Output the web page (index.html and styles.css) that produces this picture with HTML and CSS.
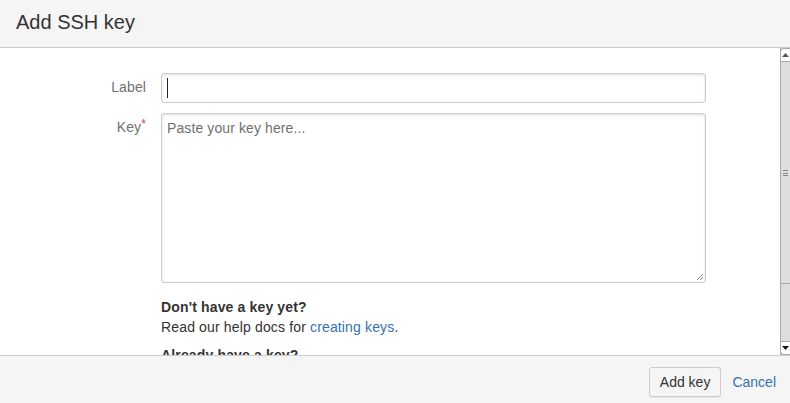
FILE: index.html
```html
<!DOCTYPE html>
<html>
<head>
<meta charset="utf-8">
<link rel="stylesheet" href="styles.css">
</head>
<body>
<div class="dialog">
  <header class="dlg-header"><h2 class="dlg-title">Add SSH key</h2></header>
  <div class="dlg-middle">
    <div class="dlg-content">
      <div class="field-group">
        <label class="field-label">Label</label>
        <div class="text-input"><span class="caret"></span></div>
      </div>
      <div class="field-group">
        <label class="field-label">Key<span class="req">*</span></label>
        <div class="textarea">Paste your key here...
          <svg class="grip" width="8" height="8" viewBox="0 0 8 8"><path d="M7 1L1 7M7 4L4 7" stroke="#888" stroke-width="1"/></svg>
        </div>
      </div>
      <div class="help">
        <p class="help-title">Don't have a key yet?</p>
        <p class="help-text">Read our help docs for <a class="link">creating keys</a>.</p>
        <p class="help-title">Already have a key?</p>
      </div>
    </div>
    <div class="scrollbar">
      <div class="sb-btn sb-up"><svg width="7" height="4" viewBox="0 0 7 4"><path d="M3.5 0L7 4H0z" fill="#555"/></svg></div>
      <div class="sb-thumb"><span class="sb-grip"></span></div>
      <div class="sb-track"></div>
      <div class="sb-btn sb-down"><svg width="7" height="4" viewBox="0 0 7 4"><path d="M0 0H7L3.5 4z" fill="#111"/></svg></div>
    </div>
  </div>
  <footer class="dlg-footer">
    <button class="btn">Add key</button>
    <a class="link cancel">Cancel</a>
  </footer>
</div>
</body>
</html>
```
FILE: styles.css
```css
* { box-sizing: border-box; }
html, body { margin: 0; padding: 0; }
body {
  font-family: "Liberation Sans", Arial, sans-serif;
  font-size: 14px;
  color: #333;
  width: 790px;
  height: 403px;
  overflow: hidden;
}
.dialog {
  display: flex;
  flex-direction: column;
  height: 403px;
}
.dlg-header {
  height: 48px;
  flex: none;
  background: #f5f5f5;
  border-bottom: 1px solid #ccc;
  padding: 0 16px;
  display: flex;
  align-items: center;
}
.dlg-title {
  margin: 0;
  font-weight: normal;
  font-size: 20px;
  color: #333;
  line-height: 24px;
  padding-bottom: 3px;
}
.dlg-middle {
  flex: 1;
  display: flex;
  min-height: 0;
  overflow: hidden;
}
.dlg-content {
  flex: 1;
  padding-top: 25px;
  overflow: hidden;
}
.field-group {
  display: grid;
  grid-template-columns: 146px 545px;
  column-gap: 15px;
  margin-bottom: 10px;
}
.field-label {
  text-align: right;
  color: #707070;
  padding-top: 5px;
  line-height: 18px;
  letter-spacing: 0.1px;
}
.req { color: #d04437; font-size: 12px; vertical-align: top; position: relative; top: -3px; }
.text-input {
  height: 30px;
  border: 1px solid #ccc;
  border-radius: 3px;
  box-shadow: inset 0 1px 3px #ddd;
  padding: 5px 5px;
  display: flex;
  align-items: center;
}
.caret { width: 1px; height: 20px; background: #222; }
.textarea {
  position: relative;
  height: 170px;
  border: 1px solid #ccc;
  border-radius: 3px;
  box-shadow: inset 0 1px 3px #ddd;
  padding: 5px 5px;
  color: #707070;
  line-height: 18px;
  letter-spacing: 0.1px;
}
.grip { position: absolute; right: 1px; bottom: 1px; }
.help { padding-left: 161px; padding-top: 4px; letter-spacing: 0.15px; }
.help p { margin: 0; line-height: 20px; }
.help-title { font-weight: bold; }
.help-text { margin-bottom: 8px !important; }
.link { color: #3572b0; text-decoration: none; }
.scrollbar {
  width: 10px;
  margin-left: auto;
  display: flex;
  flex-direction: column;
  background: #ddd;
  border-left: 1px solid #aaa;
}
.sb-btn {
  height: 14px;
  background: #fff;
  display: flex;
  align-items: center;
  justify-content: center;
  border: 1px solid #aaa;
  border-right: none;
  margin-left: -1px;
}
.sb-up { border-top-left-radius: 4px; border-top: 1px solid #aaa; }
.sb-down { border-bottom-left-radius: 4px; }
.sb-thumb {
  height: 222px;
  background: #ddd;
  border-bottom: 1px solid #aaa;
  display: flex;
  align-items: center;
  justify-content: center;
}
.sb-grip {
  width: 5px;
  height: 6px;
  border-top: 1px solid #888;
  border-bottom: 1px solid #888;
  position: relative;
}
.sb-grip::after { content: ""; position: absolute; left: 0; right: 0; top: 2px; border-top: 1px solid #888; }
.sb-track { flex: 1; background: #ddd; }
.dlg-footer {
  height: 48px;
  flex: none;
  background: #f5f5f5;
  border-top: 1px solid #ccc;
  display: flex;
  align-items: flex-start;
  justify-content: flex-end;
  padding: 11px 14px 0 0;
  gap: 11px;
}
.btn {
  font-family: inherit;
  font-size: 14px;
  color: #333;
  height: 30px;
  padding: 0 10px;
  background: #f5f5f5;
  border: 1px solid #ccc;
  border-radius: 3.01px;
  box-shadow: 0 1px 0 #e6e6e6;
}
.cancel { font-size: 14px; line-height: 30px; }
```
